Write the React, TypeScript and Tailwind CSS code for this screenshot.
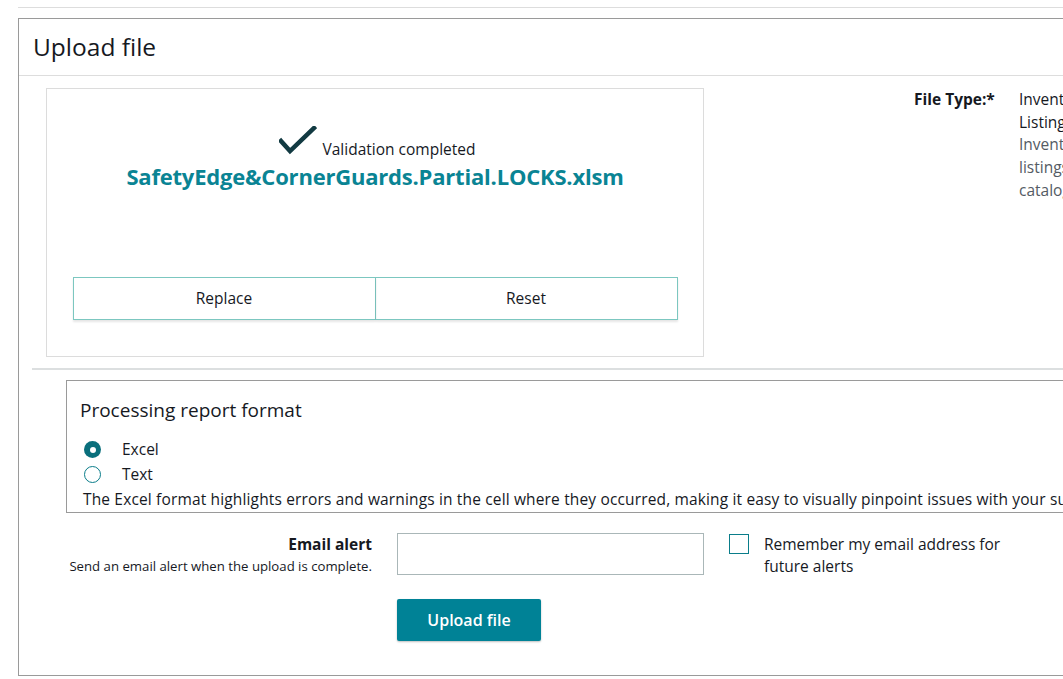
const font = { fontFamily: "'Open Sans', 'Liberation Sans', sans-serif" }

const Check = () => (
  <svg width="38" height="30" viewBox="0 0 38 30" className="mb-[4px]">
    <path d="M2 15 L11 25 L35 2" fill="none" stroke="#123a42" strokeWidth="4.5" strokeLinecap="square" />
  </svg>
)

const Radio = ({ checked }: { checked?: boolean }) =>
  checked ? (
    <span className="w-[17px] h-[17px] rounded-full bg-[#0a6f7c] flex items-center justify-center">
      <span className="w-[6px] h-[6px] rounded-full bg-white" />
    </span>
  ) : (
    <span className="w-[17px] h-[17px] rounded-full border border-[#0a7d8a] bg-white" />
  )

export default function App() {
  return (
    <main className="w-[1063px] h-[679px] overflow-hidden bg-white text-[#16191f]" style={font}>
      <div className="w-[1400px] pl-[18px]">
        <div className="mt-[7px] h-px bg-[#dddddd]" />
        <section className="mt-[10px] h-[658px] border border-[#9a9a9a]">
          <div className="h-[57px] border-b border-[#dddddd] pl-[14px] flex items-center">
            <h1 className="text-[24.5px] leading-none pt-[1px]">Upload file</h1>
          </div>

          <div className="flex pt-[12px]">
            <div className="ml-[27px] w-[658px] h-[269px] border border-[#dcdcdc] flex flex-col items-center">
              <div className="mt-[37px] flex items-end gap-[6px] pl-[4px]">
                <Check />
                <span className="text-[15.5px] leading-none mb-[3px]">Validation completed</span>
              </div>
              <div className="text-[22px] font-bold text-[#0a8494] tracking-[-0.2px]">
                SafetyEdge&amp;CornerGuards.Partial.LOCKS.xlsm
              </div>
              <div className="mt-[84px] flex">
                <button className="w-[303px] h-[43px] border border-[#7cc7c0] shadow-[0_2px_2px_rgba(0,0,0,0.1)] text-[15.5px]">
                  Replace
                </button>
                <button className="w-[302px] h-[43px] border border-l-0 border-[#7cc7c0] shadow-[0_2px_2px_rgba(0,0,0,0.1)] text-[15.5px]">
                  Reset
                </button>
              </div>
            </div>

            <div className="ml-[210px] flex text-[15.5px] leading-[22.7px] whitespace-nowrap">
              <div className="font-bold w-[79px]">File Type:*</div>
              <div className="ml-[26px]">
                <div>Inventory Files for non-Media</div>
                <div>Listing Loader</div>
                <div className="text-[#545b64]">Inventory files used for</div>
                <div className="text-[#545b64]">listings in your</div>
                <div className="text-[#545b64]">catalog</div>
              </div>
            </div>
          </div>

          <div className="ml-[13px] mt-[11px] h-[2px] bg-[#dcdfe0]" />

          <div className="ml-[47px] mt-[10px] h-[133px] border border-[#9a9a9a] pl-[13px] pt-[20px]">
            <h2 className="text-[19px] leading-none">Processing report format</h2>
            <div className="mt-[17px] flex items-center h-[25px] pl-[4px]">
              <Radio checked />
              <span className="ml-[21px] text-[15.5px]">Excel</span>
            </div>
            <div className="flex items-center h-[25px] pl-[4px]">
              <Radio />
              <span className="ml-[21px] text-[15.5px]">Text</span>
            </div>
            <p className="pl-[3px] text-[15.5px] leading-[25px] tracking-[0.15px] whitespace-nowrap">
              The Excel format highlights errors and warnings in the cell where they occurred, making it easy to visually pinpoint issues with your submission.
            </p>
          </div>

          <div className="flex mt-[20px]">
            <div className="w-[353px] text-right">
              <div className="text-[15.5px] font-bold leading-[22px]">Email alert</div>
              <div className="text-[13.2px] leading-[22px] whitespace-nowrap">Send an email alert when the upload is complete.</div>
            </div>
            <div className="ml-[25px]">
              <input className="w-[307px] h-[42px] border border-[#aab7b8] outline-none" />
              <button className="mt-[24px] block w-[144px] h-[42px] bg-[#008296] text-white text-[16px] font-semibold rounded-[2px] shadow-[0_1px_2px_rgba(0,0,0,0.25)]">
                Upload file
              </button>
            </div>
            <label className="ml-[25px] flex items-start">
              <span className="mt-[1px] w-[20px] h-[20px] border border-[#0a7d8a] bg-white" />
              <span className="ml-[15px] text-[15.5px] leading-[22px] w-[250px]">
                Remember my email address for future alerts
              </span>
            </label>
          </div>
        </section>
      </div>
    </main>
  )
}
